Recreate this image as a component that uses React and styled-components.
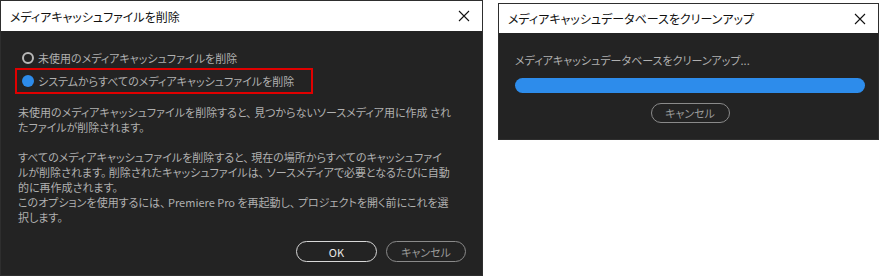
import React from "react";
import styled, { createGlobalStyle } from "styled-components";

const GlobalStyle = createGlobalStyle`
  html, body {
    margin: 0;
    padding: 0;
    background: #ffffff;
  }
  body {
    font-family: "Noto Sans CJK JP", "Noto Sans", sans-serif;
  }
`;

const Page = styled.div`
  display: flex;
  align-items: flex-start;
  gap: 15px;
  width: 880px;
  height: 276px;
`;

const Dialog = styled.div`
  display: flex;
  flex-direction: column;
  box-sizing: border-box;
  width: ${(p) => p.$w}px;
  height: ${(p) => p.$h}px;
  margin-top: ${(p) => p.$top || 0}px;
  background: #232323;
  border: 1px solid #2e2e2e;
`;

const TitleBar = styled.div`
  display: flex;
  align-items: center;
  justify-content: space-between;
  height: ${(p) => p.$h}px;
  padding: 0 12px 0 9px;
  background: #ffffff;
  color: #111;
  font-size: 12px;
  font-feature-settings: "palt";
  flex-shrink: 0;
`;

const CloseIcon = () => (
  <svg width="12" height="12" viewBox="0 0 12 12">
    <path d="M1 1 L11 11 M11 1 L1 11" stroke="#111" strokeWidth="1.1" />
  </svg>
);

const Body = styled.div`
  display: flex;
  flex-direction: column;
  flex: 1;
  padding: ${(p) => p.$pad};
  color: #b0b0b0;
  font-size: 11px;
  font-feature-settings: "palt";
  white-space: nowrap;
`;

const RadioRow = styled.div`
  display: flex;
  align-items: center;
  gap: 4px;
  height: ${(p) => (p.$boxed ? 22 : 16)}px;
  width: ${(p) => (p.$boxed ? "289px" : "auto")};
  margin-left: ${(p) => (p.$boxed ? -3 : 4)}px;
  margin-top: ${(p) => (p.$boxed ? 2 : 0)}px;
  padding-left: ${(p) => (p.$boxed ? 5 : 0)}px;
  border: ${(p) => (p.$boxed ? "2px solid #e00000" : "none")};
`;

const Radio = styled.span`
  box-sizing: border-box;
  width: 12px;
  height: 12px;
  border-radius: 50%;
  border: ${(p) => (p.$on ? "none" : "2px solid #b8b8b8")};
  background: ${(p) => (p.$on ? "#2d8ceb" : "transparent")};
  flex-shrink: 0;
`;

const Text = styled.div`
  line-height: 15px;
  margin-top: ${(p) => p.$mt || 0}px;
`;

const Spacer = styled.div`
  flex: 1;
`;

const Buttons = styled.div`
  display: flex;
  justify-content: ${(p) => p.$justify || "flex-end"};
  gap: 9px;
`;

const Button = styled.button`
  box-sizing: border-box;
  width: ${(p) => p.$w}px;
  height: ${(p) => p.$h || 21}px;
  border-radius: 12px;
  background: transparent;
  border: ${(p) => (p.$primary ? "1.5px solid #d8d8d8" : "1px solid #8a8a8a")};
  color: ${(p) => (p.$primary ? "#e8e8e8" : "#9a9a9a")};
  font-family: "Noto Sans CJK JP", "Noto Sans", sans-serif;
  font-size: 11px;
  font-feature-settings: "palt";
  padding: 0;
`;

const Progress = styled.div`
  height: 15px;
  border-radius: 8px;
  background: #2d8ceb;
  margin: 10px 0 10px;
`;

export default function App() {
  return (
    <>
      <GlobalStyle />
      <Page>
        <Dialog $w={483} $h={276}>
          <TitleBar $h={30}>
            <span>メディアキャッシュファイルを削除</span>
            <CloseIcon />
          </TitleBar>
          <Body $pad="19px 16px 13px 17px">
            <RadioRow>
              <Radio />
              <span>未使用のメディアキャッシュファイルを削除</span>
            </RadioRow>
            <RadioRow $boxed>
              <Radio $on />
              <span>システムからすべてのメディアキャッシュファイルを削除</span>
            </RadioRow>
            <Text $mt={11}>
              未使用のメディアキャッシュファイルを削除すると、 見つからないソースメディア用に作成 され
              <br />
              たファイルが削除されます。
              <br />
              <br />
              すべてのメディアキャッシュファイルを削除すると、 現在の場所からすべてのキャッシュファイ
              <br />
              ルが削除されます。 削除されたキャッシュファイルは、 ソースメディアで必要となるたびに自動
              <br />
              的に再作成されます。
              <br />
              このオプションを使用するには、 Premiere Pro を再起動し、 プロジェクトを開く前にこれを選
              <br />
              択します。
            </Text>
            <Spacer />
            <Buttons>
              <Button $primary $w={81}>OK</Button>
              <Button $w={80}>キャンセル</Button>
            </Buttons>
          </Body>
        </Dialog>
        <Dialog $w={381} $h={137} $top={3}>
          <TitleBar $h={29}>
            <span>メディアキャッシュデータベースをクリーンアップ</span>
            <CloseIcon />
          </TitleBar>
          <Body $pad="20px 13px 0 16px">
            <Text>メディアキャッシュデータベースをクリーンアップ...</Text>
            <Progress />
            <Buttons $justify="center">
              <Button $w={79} $h={20}>キャンセル</Button>
            </Buttons>
          </Body>
        </Dialog>
      </Page>
    </>
  );
}
